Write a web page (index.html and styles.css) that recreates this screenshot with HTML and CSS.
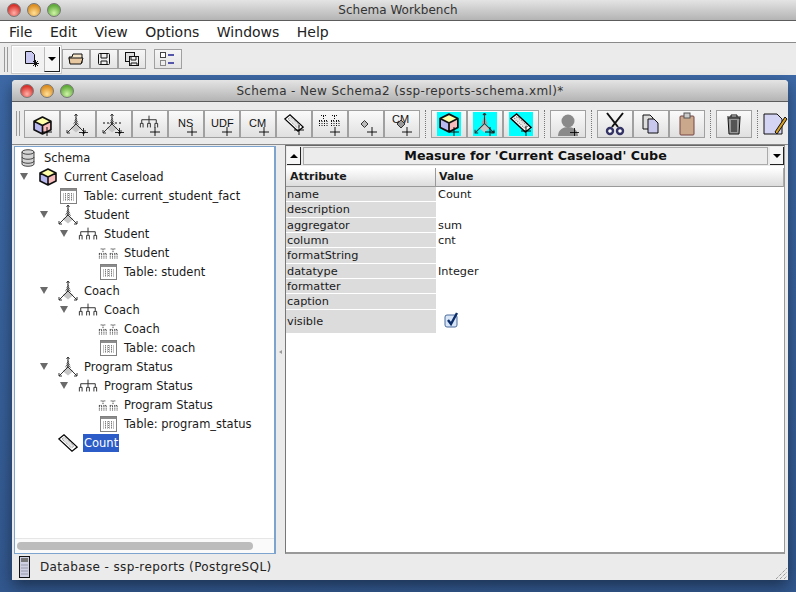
FILE: index.html
```html
<!DOCTYPE html>
<html lang="en">
<head>
  <meta charset="UTF-8" />
  <title>Schema Workbench</title>
  <link rel="stylesheet" href="styles.css">
</head>
<body>
  <svg class="defs" width="0" height="0">
    <defs>
      <pattern id="stipple" width="2" height="2" patternUnits="userSpaceOnUse"><rect width="2" height="2" fill="#ddd"/><rect width="1" height="1" fill="#666"/><rect x="1" y="1" width="1" height="1" fill="#666"/></pattern>
      <symbol id="plus" viewBox="0 0 11 11"><path d="M5.5 0v11M0 5.5h11" stroke="#000" fill="none"/></symbol>
      <symbol id="cube" viewBox="0 0 18 18">
        <path d="M9 1l8 4-8 4-8-4z" fill="#ffffa8"/>
        <path d="M1 5l8 4v8l-8-4z" fill="#b8b8f0"/>
        <path d="M17 5l-8 4v8l8-4z" fill="#f8bcbc"/>
        <path d="M9 1l8 4v8l-8 4-8-4V5zM1 5l8 4 8-4M9 9v8" fill="none" stroke="#111" stroke-width="1.600" stroke-linejoin="round"/>
      </symbol>
      <symbol id="dim" viewBox="0 0 20 20">
        <path d="M10 2l3 9-3-1-3 1z" fill="url(#stipple)"/>
        <path d="M10 10l5.500 4-5.500 4.500-5.500-4.500z" fill="#c6c6c6"/>
        <path d="M10 0v10L1 19M10 10l9 9M8.500 2l1.500-2 1.500 2M1 16v3h3M19 16v3h-3" fill="none" stroke="#333"/>
      </symbol>
      <symbol id="hier" viewBox="0 0 22 14">
        <path d="M11 0v5M3 8V4.500h16V8M11 5v3M1.500 13V8.500h3V13M9.500 13V8.500h3V13M17.500 13V8.500h3V13" fill="none" stroke="#222"/>
      </symbol>
      <symbol id="level" viewBox="0 0 22 14">
        <path d="M1.500 8v6M4 8v6M6.500 8v6M9 8v6M13.500 8v6M16 8v6M18.500 8v6M21 8v6M1 7.500h3M6 7.500h3M13 7.500h3M18 7.500h3M5.500 3v3M16.500 3v3M3 2.500h5M14 2.500h5" fill="none" stroke="#111" stroke-dasharray="1 1"/>
      </symbol>
      <symbol id="table" viewBox="0 0 17 16">
        <rect x=".5" y=".5" width="16" height="15" fill="#fff" stroke="#808080"/>
        <rect x="1" y="1" width="15" height="2" fill="#8c8c8c"/>
        <path d="M3 6h11M3 8h11M3 10h11M3 12h11M5.500 5v8M8.500 5v8M11.500 5v8" stroke="#808080" stroke-dasharray="1 1"/>
      </symbol>
      <symbol id="measure" viewBox="0 0 20 18">
        <path d="M.8 5L6 .8 19.200 13 14 17.200z" fill="#fff" stroke="#000" stroke-width="1.200"/>
        <path d="M4 5l2.500-2 9.500 9-2.500 2z" fill="#e4e4e4" stroke="#888" stroke-dasharray="1 1"/>
      </symbol>
      <symbol id="schema" viewBox="0 0 14 18">
        <path d="M1 3c0-3 12-3 12 0v12c0 3-12 3-12 0z" fill="#d4d4d4" stroke="#444"/>
        <path d="M1 3c0 3 12 3 12 0M1 8c0 3 12 3 12 0M1 12c0 3 12 3 12 0" fill="none" stroke="#444"/>
      </symbol>
    </defs>
  </svg>

  <div class="titlebar">
    <div class="lights"><i class="light red"></i><i class="light amber"></i><i class="light green"></i></div>
    <div class="title">Schema Workbench</div>
  </div>

  <nav class="menubar">
    <span>File</span><span>Edit</span><span>View</span><span>Options</span><span>Windows</span><span>Help</span>
  </nav>

  <div class="maintools">
    <div class="grip"></div>
    <div class="newbtn">
      <div class="newbtn-icon">
        <svg width="14" height="16" viewBox="0 0 14 16"><path d="M.5.500h6l3 3v9h-9z" fill="#c8c8f0" stroke="#111"/><path d="M10.500 9v7M7 12.500h7M8 10l5 5M13 10l-5 5" stroke="#111"/></svg>
      </div>
      <div class="newbtn-arrow"><i class="tri-down"></i></div>
    </div>
    <div class="smallbtns">
      <button class="sbtn"><svg width="16" height="12" viewBox="0 0 16 12"><path d="M1 4h3l1-3h9v9H2z" fill="#f4e4c8" stroke="#111"/><path d="M1 5h14l-2 6H2z" fill="#e8c8a0" stroke="#111"/></svg></button>
      <button class="sbtn"><svg width="12" height="12" viewBox="0 0 12 12"><rect x=".5" y=".5" width="11" height="11" rx="1" fill="#eee" stroke="#111"/><path d="M3 1v4h6V1M3 11V8h6v3" fill="none" stroke="#111"/></svg></button>
      <button class="sbtn"><svg width="14" height="14" viewBox="0 0 14 14"><rect x=".5" y=".5" width="9" height="9" fill="#ddd" stroke="#111"/><rect x="4.500" y="4.500" width="9" height="9" fill="#eee" stroke="#111"/><path d="M6 5v3h5V5M6 13v-2h6v2" fill="none" stroke="#111"/></svg></button>
    </div>
    <button class="sbtn sbtn-last"><svg width="16" height="14" viewBox="0 0 16 14"><rect x=".5" y=".5" width="5" height="5" fill="#fff" stroke="#444"/><rect x=".5" y="8.500" width="5" height="5" fill="#eee" stroke="#888"/><path d="M8 3h6M8 11h6" stroke="#55a" stroke-width="2"/></svg></button>
  </div>

  <div class="desktop">
    <div class="window">
      <div class="titlebar wintitle">
        <div class="lights"><i class="light red"></i><i class="light amber"></i><i class="light green"></i></div>
        <div class="title">Schema - New Schema2 (ssp-reports-schema.xml)*</div>
      </div>

      <div class="wintools">
        <div class="grip"></div>
        <div class="tgroup">
          <button class="tbtn"><svg width="24" height="24"><use href="#cube" x="3" y="4" width="19" height="19"/><use href="#plus" x="12" y="15" width="10" height="10"/></svg></button>
          <button class="tbtn"><svg width="24" height="24"><use href="#dim" x="0" y="2" width="20" height="20"/><use href="#plus" x="13" y="16" width="9" height="9"/></svg></button>
          <button class="tbtn"><svg width="24" height="24"><use href="#dim" x="0" y="2" width="20" height="20"/><path d="M1 11h18" stroke="#111" stroke-dasharray="2 2"/><use href="#plus" x="13" y="16" width="9" height="9"/></svg></button>
          <button class="tbtn"><svg width="24" height="24"><use href="#hier" x="1" y="3" width="20" height="14"/><use href="#plus" x="12" y="15" width="10" height="10"/></svg></button>
          <button class="tbtn"><svg width="24" height="24"><text class="btext" x="4" y="15">NS</text><use href="#plus" x="13" y="15" width="10" height="10"/></svg></button>
          <button class="tbtn"><svg width="24" height="24"><text class="btext" x="1" y="15">UDF</text><use href="#plus" x="12" y="15" width="10" height="10"/></svg></button>
          <button class="tbtn"><svg width="24" height="24"><text class="btext" x="3" y="15">CM</text><use href="#plus" x="13" y="15" width="10" height="10"/></svg></button>
          <button class="tbtn"><svg width="24" height="24"><use href="#measure" x="2" y="2" width="20" height="18"/><use href="#plus" x="12" y="13" width="10" height="10"/></svg></button>
          <button class="tbtn"><svg width="24" height="24"><use href="#level" x="0" y="1" width="22" height="14"/><use href="#plus" x="12" y="15" width="10" height="10"/></svg></button>
          <button class="tbtn"><svg width="24" height="24"><path d="M7 12l3.500-3.500 3.500 3.500-3.500 3.500z" fill="#bbb" stroke="#333"/><use href="#plus" x="13" y="15" width="10" height="10"/></svg></button>
          <button class="tbtn"><svg width="24" height="24"><text class="btext" x="2" y="11">CM</text><path d="M7 12l4-4 4 4-4 4z" fill="#999" stroke="#333"/><use href="#plus" x="12" y="15" width="10" height="10"/></svg></button>
        </div>
        <div class="tsep"></div>
        <div class="tgroup">
          <button class="tbtn"><span class="cyan"><svg width="24" height="24"><use href="#cube" x="2" y="1" width="20" height="20"/><use href="#plus" x="12" y="15" width="10" height="10"/></svg></span></button>
          <button class="tbtn"><span class="cyan"><svg width="24" height="24"><use href="#dim" x="1" y="1" width="21" height="21"/><use href="#plus" x="12" y="15" width="10" height="10"/></svg></span></button>
          <button class="tbtn"><span class="cyan"><svg width="24" height="24"><use href="#measure" x="1" y="1" width="22" height="20"/><use href="#plus" x="12" y="14" width="10" height="10"/></svg></span></button>
        </div>
        <div class="tsep"></div>
        <div class="tgroup">
          <button class="tbtn"><svg width="26" height="24"><circle cx="13" cy="9" r="6.500" fill="#8a8a8a"/><path d="M3 24c0-6 5-9 10-9s10 3 10 9z" fill="#8a8a8a"/><use href="#plus" x="15" y="16" width="9" height="9"/></svg></button>
        </div>
        <div class="tsep"></div>
        <div class="tgroup">
          <button class="tbtn"><svg width="20" height="24" viewBox="0 0 20 24"><path d="M2 1l11 14M18 1L7 15" stroke="#111" stroke-width="2" fill="none"/><circle cx="5" cy="19" r="3" fill="#fff" stroke="#336" stroke-width="2.400"/><circle cx="15" cy="19" r="3" fill="#fff" stroke="#336" stroke-width="2.400"/></svg></button>
          <button class="tbtn"><svg width="20" height="20" viewBox="0 0 20 20"><path d="M2 1h7l3 3v11H2z" fill="#ddd" stroke="#111"/><path d="M7 5h6l4 4v10H7z" fill="#c8c8ec" stroke="#111"/></svg></button>
          <button class="tbtn"><svg width="16" height="24" viewBox="0 0 16 24"><rect x="1" y="4" width="14" height="19" rx="1" fill="#caa88c" stroke="#744"/><rect x="5" y="1" width="6" height="5" fill="#ccc" stroke="#555"/></svg></button>
        </div>
        <div class="tsep"></div>
        <div class="tgroup">
          <button class="tbtn"><svg width="16" height="22" viewBox="0 0 16 22"><path d="M2 5l1 16h10l1-16z" fill="#999" stroke="#111"/><path d="M1 4h14M5 4V2h6v2M6 7v12M8 7v12M10 7v12" stroke="#111" fill="none"/></svg></button>
        </div>
        <div class="tsep"></div>
        <svg class="pencil" width="25" height="26" viewBox="0 0 25 26"><path d="M1 3h13l5 5v15H1z" fill="#d4d4f4" stroke="#111"/><path d="M12 21l10-15 2 2-10 15z" fill="#d8a020" stroke="#111"/></svg>
      </div>

      <div class="content">
        <div class="tree-pane">
          <ul class="tree">
            <li class="node l0"><span class="icon"><svg width="14" height="18"><use href="#schema"/></svg></span><span class="label">Schema</span></li>
            <li class="node l0"><i class="twisty"></i><span class="icon"><svg width="18" height="18"><use href="#cube"/></svg></span><span class="label">Current Caseload</span></li>
            <li class="node l2"><span class="icon"><svg width="17" height="16"><use href="#table"/></svg></span><span class="label">Table: current_student_fact</span></li>
            <li class="node l1"><i class="twisty"></i><span class="icon"><svg width="20" height="20"><use href="#dim"/></svg></span><span class="label">Student</span></li>
            <li class="node l2"><i class="twisty"></i><span class="icon"><svg width="22" height="14"><use href="#hier"/></svg></span><span class="label">Student</span></li>
            <li class="node l4"><span class="icon"><svg width="22" height="14"><use href="#level"/></svg></span><span class="label">Student</span></li>
            <li class="node l4"><span class="icon"><svg width="17" height="16"><use href="#table"/></svg></span><span class="label">Table: student</span></li>
            <li class="node l1"><i class="twisty"></i><span class="icon"><svg width="20" height="20"><use href="#dim"/></svg></span><span class="label">Coach</span></li>
            <li class="node l2"><i class="twisty"></i><span class="icon"><svg width="22" height="14"><use href="#hier"/></svg></span><span class="label">Coach</span></li>
            <li class="node l4"><span class="icon"><svg width="22" height="14"><use href="#level"/></svg></span><span class="label">Coach</span></li>
            <li class="node l4"><span class="icon"><svg width="17" height="16"><use href="#table"/></svg></span><span class="label">Table: coach</span></li>
            <li class="node l1"><i class="twisty"></i><span class="icon"><svg width="20" height="20"><use href="#dim"/></svg></span><span class="label">Program Status</span></li>
            <li class="node l2"><i class="twisty"></i><span class="icon"><svg width="22" height="14"><use href="#hier"/></svg></span><span class="label">Program Status</span></li>
            <li class="node l4"><span class="icon"><svg width="22" height="14"><use href="#level"/></svg></span><span class="label">Program Status</span></li>
            <li class="node l4"><span class="icon"><svg width="17" height="16"><use href="#table"/></svg></span><span class="label">Table: program_status</span></li>
            <li class="node l2"><span class="icon"><svg width="20" height="18"><use href="#measure"/></svg></span><span class="label selected">Count</span></li>
          </ul>
          <div class="hscroll"><div class="hscroll-thumb"></div></div>
        </div>

        <div class="divider"><i class="divider-arrow"></i></div>

        <div class="detail">
          <div class="detail-head">
            <div class="headbtn"><i class="tri-up"></i></div>
            <div class="headtitle">Measure for 'Current Caseload' Cube</div>
            <div class="headbtn"><i class="tri-down"></i></div>
          </div>
          <div class="attr-head">
            <div class="attr-col">Attribute</div>
            <div class="val-col">Value</div>
          </div>
          <div class="attr-row"><div class="attr-col">name</div><div class="val-col">Count</div></div>
          <div class="attr-row"><div class="attr-col">description</div><div class="val-col"></div></div>
          <div class="attr-row"><div class="attr-col">aggregator</div><div class="val-col">sum</div></div>
          <div class="attr-row"><div class="attr-col">column</div><div class="val-col">cnt</div></div>
          <div class="attr-row"><div class="attr-col">formatString</div><div class="val-col"></div></div>
          <div class="attr-row"><div class="attr-col">datatype</div><div class="val-col">Integer</div></div>
          <div class="attr-row"><div class="attr-col">formatter</div><div class="val-col"></div></div>
          <div class="attr-row"><div class="attr-col">caption</div><div class="val-col"></div></div>
          <div class="attr-row attr-row-tall"><div class="attr-col">visible</div><div class="val-col">
            <svg class="check" width="16" height="17" viewBox="0 0 16 17"><rect x="1" y="3" width="12" height="12" rx="2" fill="#d8e6f8" stroke="#4a6a9c"/><path d="M4 8l3 4 6-11" fill="none" stroke="#0c2f6c" stroke-width="2.400"/></svg>
          </div></div>
        </div>
      </div>

      <div class="statusbar">
        <svg width="11" height="22" viewBox="0 0 11 22"><rect x=".5" y=".5" width="10" height="21" fill="#cfcfe4" stroke="#111"/><rect x="2" y="2" width="7" height="4" fill="#777"/><path d="M2 9h7M2 12h7M2 15h7M2 18h7" stroke="#99a"/></svg>
        <span class="status-text">Database - ssp-reports (PostgreSQL)</span>
        <svg class="resize" width="11" height="12" viewBox="0 0 11 12"><path d="M0 12L11 1M4 12l7-7M8 12l3-3" stroke="#777" stroke-dasharray="1 1"/></svg>
      </div>
    </div>
  </div>
</body>
</html>
```

FILE: styles.css
```css
* {
  box-sizing: border-box;
}
html, body {
  height: 100%;
}
body {
  margin: 0;
  overflow: hidden;
  display: flex;
  flex-direction: column;
  background-color: #ebebeb;
  font-family: "DejaVu Sans", sans-serif;
  font-size: 11.5px;
  color: #1a1a1a;
}
.defs {
  position: absolute;
}
button {
  padding: 0;
  font: inherit;
}

/* title bars */
.titlebar {
  display: grid;
  grid-template-columns: 1fr auto 1fr;
  align-items: center;
  height: 21px;
  flex: none;
  background: linear-gradient(#e4e4e4, #b4b4b4);
  border-bottom: 1px solid #5c5c5c;
}
.lights {
  grid-column: 1;
  grid-row: 1;
  display: flex;
  gap: 6px;
  padding-left: 7px;
}
.light {
  width: 14px;
  height: 14px;
  border-radius: 50%;
  border: 1px solid #777;
}
.red { background: radial-gradient(circle at 50% 75%, #ffb0a8, #d8332c 70%); }
.amber { background: radial-gradient(circle at 50% 75%, #ffe09a, #dd8f22 70%); }
.green { background: radial-gradient(circle at 50% 75%, #d0f4a8, #62ad3c 70%); }
.title {
  grid-column: 2;
  grid-row: 1;
  font-size: 12px;
  color: #333;
  white-space: nowrap;
}

/* menu */
.menubar {
  display: flex;
  gap: 17.500px;
  align-items: center;
  flex: none;
  height: 22px;
  padding-left: 9px;
  background-color: #fff;
  border-bottom: 1px solid #8a8a8a;
  font-size: 14px;
  color: #222;
}

/* app toolbar */
.maintools {
  display: flex;
  align-items: center;
  flex: none;
  height: 32px;
  padding-left: 4px;
  background-color: #ebebeb;
}
.grip {
  width: 4px;
  height: 25px;
  flex: none;
  border-left: 1px solid #999;
  border-right: 1px solid #999;
}
.newbtn {
  display: flex;
  width: 49px;
  height: 27px;
  margin-left: 4px;
  background-color: #f2f2f2;
  border: 1px solid #fff;
  outline: 1px solid #ccc;
}
.newbtn-icon {
  flex: 1;
  display: flex;
  align-items: center;
  justify-content: center;
  padding-left: 6px;
}
.newbtn-arrow {
  width: 16px;
  display: flex;
  align-items: center;
  justify-content: center;
  background-color: #f6f6f6;
  border-left: 1px solid #bbb;
  border-right: 1px solid #222;
  border-bottom: 1px solid #222;
}
.tri-down {
  width: 0;
  height: 0;
  border-left: 4px solid transparent;
  border-right: 4px solid transparent;
  border-top: 4px solid #000;
}
.tri-up {
  width: 0;
  height: 0;
  border-left: 4px solid transparent;
  border-right: 4px solid transparent;
  border-bottom: 4px solid #000;
}
.smallbtns {
  display: flex;
  margin-left: 1px;
}
.sbtn {
  display: flex;
  align-items: center;
  justify-content: center;
  width: 28px;
  height: 20px;
  background: linear-gradient(#f6f6f6, #e4e4e4);
  border: 1px solid #a0a0a0;
}
.sbtn-last {
  margin-left: 8px;
}

/* desktop */
.desktop {
  flex: 1;
  padding: 5px 8px 0 12px;
  background: linear-gradient(#3d69a6, #32588f);
}
.window {
  display: flex;
  flex-direction: column;
  width: 776px;
  height: 500px;
  background-color: #ebebeb;
  border-radius: 4px 4px 0 0;
  box-shadow: 0 6px 16px rgba(0, 0, 0, 0.45);
}
.wintitle {
  border-radius: 4px 4px 0 0;
  height: 22px;
  padding-top: 1px;
}
.wintitle .lights {
  padding-left: 8px;
}
.wintitle .title {
  letter-spacing: 0.38px;
}

/* window toolbar */
.wintools {
  display: flex;
  align-items: center;
  flex: none;
  height: 43px;
  padding: 1px 0 0 4px;
  background-color: #ebebeb;
  border-bottom: 1px solid #8a8a8a;
  overflow: hidden;
}
.wintools .grip {
  margin-right: 4px;
}
.tgroup {
  display: flex;
  flex: none;
}
.tbtn {
  display: flex;
  align-items: center;
  justify-content: center;
  width: 36px;
  height: 28px;
  background: linear-gradient(#fafafa, #e0e0e0);
  border: 1px solid #a0a0a0;
}
.tsep {
  width: 1px;
  height: 28px;
  flex: none;
  margin: 0 5px;
  border-left: 1px dotted #777;
}
.cyan {
  display: flex;
  width: 24px;
  height: 24px;
  background-color: #00ffff;
}
.btext {
  font-family: "Liberation Sans", sans-serif;
  font-size: 11px;
  fill: #111;
}
.pencil {
  flex: none;
}

/* split content */
.content {
  display: flex;
  flex: 1;
  min-height: 0;
  padding-left: 2px;
}
.tree-pane {
  display: flex;
  flex-direction: column;
  width: 262px;
  flex: none;
  margin-top: 1px;
  background-color: #fff;
  border: 1px solid #7da4cf;
  border-right-width: 2px;
}
.tree {
  flex: 1;
  margin: 0;
  padding: 1px 0 0;
  list-style: none;
}
.node {
  display: flex;
  align-items: center;
  height: 19px;
  white-space: nowrap;
}
.l0 { padding-left: 3px; }
.l1 { padding-left: 23px; }
.l2 { padding-left: 43px; }
.l4 { padding-left: 83px; }
.twisty {
  flex: none;
  width: 0;
  height: 0;
  margin-left: 2px;
  margin-right: 10px;
  border-left: 4px solid transparent;
  border-right: 4px solid transparent;
  border-top: 7px solid #6a6a6a;
}
.icon {
  display: flex;
  align-items: center;
  justify-content: center;
  width: 20px;
  height: 19px;
  flex: none;
}
.label {
  margin-left: 5px;
  padding: 0 1px;
  line-height: 18px;
}
.selected {
  background-color: #2b5cc8;
  color: #fff;
}
.hscroll {
  flex: none;
  height: 15px;
  padding: 3px 2px 0;
  background-color: #fafafa;
  border-top: 1px solid #e6e6e6;
}
.hscroll-thumb {
  width: 236px;
  height: 8px;
  border-radius: 4px;
  background-color: #bcbcbc;
}
.divider {
  display: flex;
  align-items: center;
  justify-content: center;
  width: 9px;
  flex: none;
}
.divider-arrow {
  width: 0;
  height: 0;
  border-top: 2px solid transparent;
  border-bottom: 2px solid transparent;
  border-right: 3px solid #999;
  margin-top: 4px;
}

/* detail */
.detail {
  width: 500px;
  flex: none;
  background-color: #fff;
  border: 1px solid #999;
  border-top-color: #666;
  border-left-color: #777;
  border-bottom-width: 2px;
}
.detail-head {
  display: flex;
  gap: 2px;
  height: 20px;
  padding: 1px 0 0 1px;
  background-color: #ebebeb;
}
.headbtn {
  display: flex;
  align-items: center;
  justify-content: center;
  width: 14px;
  height: 18px;
  flex: none;
  background-color: #f6f6f6;
  border-right: 1px solid #222;
  border-bottom: 1px solid #222;
}
.headtitle {
  flex: 1;
  height: 18px;
  line-height: 16px;
  text-align: center;
  font-size: 12.700px;
  font-weight: bold;
  color: #111;
  background-color: #ececec;
  border: 1px solid #aaa;
}
.attr-head {
  display: flex;
  height: 19px;
  margin-top: 2px;
  font-size: 11px;
  font-weight: bold;
  background: linear-gradient(#fff, #dcdcdc);
  border-bottom: 1px solid #999;
  border-right: 1px solid #aaa;
}
.attr-head .attr-col {
  padding-left: 4px;
  border-right: 1px solid #999;
  background: none;
  height: 18px;
}
.attr-head .attr-col, .attr-head .val-col {
  line-height: 18px;
}
.attr-col {
  width: 150px;
  flex: none;
  padding-left: 1px;
}
.val-col {
  padding-left: 2px;
}
.attr-head .val-col {
  padding-left: 3px;
}
.attr-row {
  display: flex;
  height: 15.330px;
  line-height: 15px;
  font-size: 11.300px;
}
.attr-row .attr-col {
  background-color: #dcdcdc;
  border-bottom: 1px solid #fff;
}
.attr-row-tall {
  height: 24px;
  line-height: 24px;
}
.check {
  margin: 2px 0 0 6px;
}

/* status */
.statusbar {
  display: flex;
  align-items: center;
  flex: none;
  height: 26px;
  padding-left: 7px;
  background-color: #ebebeb;
}
.status-text {
  margin-left: 10px;
  font-size: 12px;
  letter-spacing: 0.38px;
  color: #222;
}
.resize {
  margin-left: auto;
  margin-right: 1px;
  margin-bottom: 1px;
  align-self: flex-end;
}
```
